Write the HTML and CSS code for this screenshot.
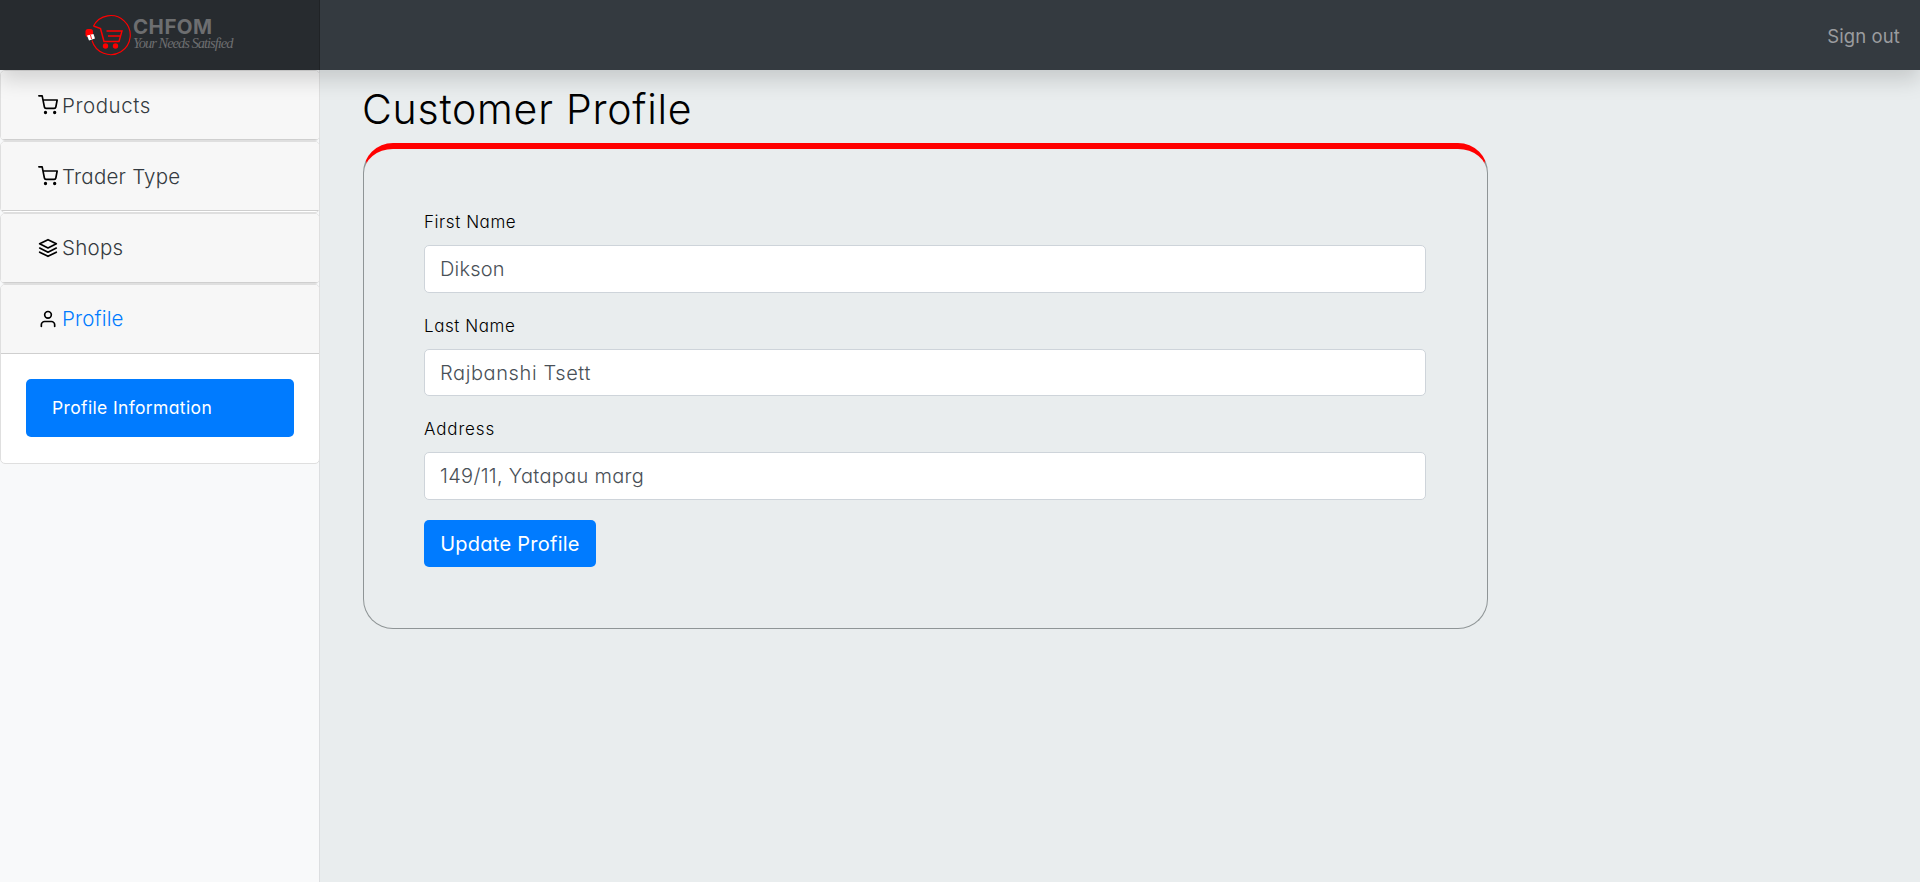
FILE: index.html
```html
<!DOCTYPE html>
<html lang="en">
<head>
<meta charset="utf-8">
<title>Customer Profile</title>
<link rel="stylesheet" href="styles.css">
</head>
<body>
<header class="topbar">
  <a class="brand">
    <svg class="brand-mark" width="48" height="42" viewBox="0 0 48 42" fill="none" stroke="#f00">
      <path d="M9.500 12A19.500 19.500 0 1 1 8 26.500" stroke-width="1.100"/>
      <path d="M9.500 12l7 2.500 3.500 13h15.500" stroke-width="1.500"/>
      <path d="M22.500 17h15.500l-3 10.500M24 22h12.500" stroke-width="1.400"/>
      <g fill="#f00" stroke="none"><circle cx="21.500" cy="32" r="2.700"/><circle cx="31.500" cy="32" r="2.700"/><rect x="1.500" y="15" width="7.500" height="8" rx="2.500"/></g>
      <path d="M3 21.500l6.500-1.500 1.500 4.500-6 2z" fill="#fff" stroke="none"/>
      <path d="M6.500 21l1 4" stroke-width=".9"/>
    </svg>
    <span class="brand-text"><b class="brand-name">CHFOM</b><i class="brand-slogan">Your Needs Satisfied</i></span>
  </a>
  <a class="signout">Sign out</a>
</header>
<div class="layout">
  <nav class="sidebar">
    <section class="card"><h2 class="card-header">
      <svg class="icon" viewBox="0 0 24 24"><circle cx="9" cy="21" r="1"/><circle cx="20" cy="21" r="1"/><path d="M1 1h4l2.680 13.390a2 2 0 0 0 2 1.610h9.720a2 2 0 0 0 2-1.610L23 6H6"/></svg><span class="t-products">Products</span></h2></section>
    <section class="card"><h2 class="card-header">
      <svg class="icon" viewBox="0 0 24 24"><circle cx="9" cy="21" r="1"/><circle cx="20" cy="21" r="1"/><path d="M1 1h4l2.680 13.390a2 2 0 0 0 2 1.610h9.720a2 2 0 0 0 2-1.610L23 6H6"/></svg><span class="t-trader">Trader Type</span></h2></section>
    <section class="card"><h2 class="card-header">
      <svg class="icon" viewBox="0 0 24 24"><path d="M12 2L2 7l10 5 10-5-10-5zM2 17l10 5 10-5M2 12l10 5 10-5"/></svg><span class="t-shops">Shops</span></h2></section>
    <section class="card card-open"><h2 class="card-header active">
      <svg class="icon" viewBox="0 0 24 24"><path d="M20 21v-2a4 4 0 0 0-4-4H8a4 4 0 0 0-4 4v2"/><circle cx="12" cy="7" r="4"/></svg><span class="t-profile">Profile</span></h2>
      <div class="card-body"><a class="pill"><span class="t-info">Profile Information</span></a></div>
    </section>
  </nav>
  <main class="content">
    <h1 class="title">Customer Profile</h1>
    <form class="panel">
      <label class="label t-first" for="first">First Name</label>
      <input class="field t-dikson" id="first" value="Dikson">
      <label class="label t-last" for="last">Last Name</label>
      <input class="field t-raj" id="last" value="Rajbanshi Tsett">
      <label class="label t-address" for="address">Address</label>
      <input class="field t-marg" id="address" value="149/11, Yatapau marg">
      <button class="submit" type="button">Update Profile</button>
    </form>
  </main>
</div>
</body>
</html>
```
FILE: styles.css
```css
* { box-sizing: border-box; }
body {
  margin: 0;
  height: 882px;
  overflow: hidden;
  display: flex;
  flex-direction: column;
  background: #e9edee;
  font-family: Inter, "Open Sans", sans-serif;
  font-feature-settings: "cv11";
  font-weight: 300;
  color: #000;
}
.topbar {
  height: 70px;
  flex: none;
  display: flex;
  justify-content: space-between;
  align-items: center;
  background: #343a40;
  box-shadow: 0 10px 20px rgba(0, 0, 0, .15);
  position: relative;
  z-index: 1;
}
.brand {
  width: 320px;
  height: 70px;
  padding: 14px 0 0 84px;
  display: flex;
  background: #272b2f;
  box-shadow: inset -1px 0 0 #202326;
}
.brand-mark { flex: none; }
.brand-text { display: flex; flex-direction: column; color: #6d6e70; white-space: nowrap; padding: 3px 0 0 1px; }
.brand-name { font-size: 20.500px; line-height: 19px; font-weight: 700; letter-spacing: .45px; }
.brand-slogan { font: italic 14.500px/14px "Liberation Serif", serif; letter-spacing: -1px; }
.signout { margin-right: 20px; padding-top: 1px; font-size: 18.500px; font-weight: 400; color: #9a9c9f; letter-spacing: .1px; }
.layout { flex: 1; display: flex; }
.sidebar { width: 320px; background: #f8f9fa; box-shadow: inset -1px 0 0 #dcdee0; }
.card { height: 71.250px; border: 1px solid #dfdfdf; border-radius: 5px; background: #fff; overflow: hidden; }
.card-header {
  margin: 0;
  height: 69px;
  padding-left: 37px;
  display: flex;
  align-items: center;
  gap: 4px;
  background: #f7f7f7;
  border-bottom: 1px solid #cfcfcf;
  font-size: 20.500px;
  font-weight: 300;
  color: #343a40;
}
.active { color: #007bff; }
.icon { width: 20px; height: 20px; fill: none; stroke: #000; stroke-width: 2; stroke-linecap: round; stroke-linejoin: round; }
.card-open { height: 180px; }
.card-body { padding: 25px; }
.pill { height: 58px; padding-left: 26px; display: flex; align-items: center; border-radius: 5px; background: #007bff; color: #fff; font-size: 17.500px; font-weight: 400; }
.content { padding: 15px 0 0 43px; }
.title { margin: 0 0 10px -1px; height: 48px; line-height: 48px; font-size: 41px; font-weight: 300; letter-spacing: .75px; }
.panel {
  width: 1125px;
  height: 486px;
  padding: 60px 61px 0 60px;
  border: 1px solid #8f9596;
  border-top: 6px solid #f00;
  border-radius: 30px;
  display: flex;
  flex-direction: column;
  align-items: flex-start;
}
.label { font-size: 17px; line-height: 26px; margin-bottom: 10px; }
.field { width: 100%; height: 47.500px; margin: 0 0 20px; padding: 0 15px; border: 1px solid #ced4da; border-radius: 5px; background: #fff; color: #495057; font: inherit; font-size: 20px; font-feature-settings: inherit; }
.submit { width: 172px; height: 47px; padding: 1px 0 0; border: 0; border-radius: 5px; background: #007bff; color: #fff; font: inherit; font-feature-settings: inherit; font-size: 20px; font-weight: 400; letter-spacing: .26px; }

/* Optical tracking per text */
.t-products { letter-spacing: .55px; }
.t-trader { letter-spacing: .22px; }
.t-shops { letter-spacing: .25px; }
.t-profile { letter-spacing: .15px; }
.t-info { letter-spacing: .36px; }
.t-first, .t-last { letter-spacing: .57px; }
.t-address { letter-spacing: .85px; }
.t-dikson { letter-spacing: .2px; }
.t-raj { letter-spacing: .6px; padding-top: 1px; }
.t-marg { letter-spacing: .3px; }
```
